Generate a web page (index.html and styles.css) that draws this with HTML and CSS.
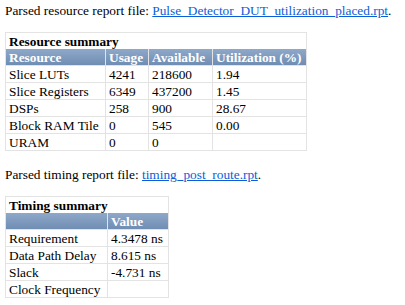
FILE: index.html
```html
<!DOCTYPE html>
<html>
<head>
<meta charset="utf-8">
<link rel="stylesheet" href="styles.css">
</head>
<body>
<p class="line">Parsed resource report file: <a href="#">Pulse_Detector_DUT_utilization_placed.rpt</a>.</p>
<table class="report res">
  <tr><td class="caption" colspan="4">Resource summary</td></tr>
  <tr class="head"><th class="c1">Resource</th><th class="c2">Usage</th><th class="c3">Available</th><th class="c4">Utilization (%)</th></tr>
  <tr><td>Slice LUTs</td><td>4241</td><td>218600</td><td>1.94</td></tr>
  <tr><td>Slice Registers</td><td>6349</td><td>437200</td><td>1.45</td></tr>
  <tr><td>DSPs</td><td>258</td><td>900</td><td>28.67</td></tr>
  <tr><td>Block RAM Tile</td><td>0</td><td>545</td><td>0.00</td></tr>
  <tr><td>URAM</td><td>0</td><td>0</td><td></td></tr>
</table>
<p class="line second">Parsed timing report file: <a href="#">timing_post_route.rpt</a>.</p>
<table class="report tim">
  <tr><td class="caption" colspan="2">Timing summary</td></tr>
  <tr class="head"><th class="t1"></th><th class="t2">Value</th></tr>
  <tr><td>Requirement</td><td>4.3478 ns</td></tr>
  <tr><td>Data Path Delay</td><td>8.615 ns</td></tr>
  <tr><td>Slack</td><td>-4.731 ns</td></tr>
  <tr><td>Clock Frequency</td><td></td></tr>
</table>
</body>
</html>
```
FILE: styles.css
```css
html, body {
  margin: 0;
  background: #ffffff;
}
body {
  padding: 3px 5px;
  font-family: "Liberation Serif", "Times New Roman", serif;
  font-size: 13.33px;
  color: #000000;
}
.line {
  margin: 0;
  line-height: 15px;
}
.line a {
  color: #0b5ed8;
  text-decoration: underline;
}
.res {
  margin-top: 14px;
}
.second {
  margin-top: 16px;
}
.tim {
  margin-top: 14px;
}
.report {
  border-collapse: collapse;
  border: 1px solid #e3e3e3;
}
.report td, .report th {
  border: 1px solid #e3e3e3;
  height: 16px;
  padding: 0 3px 0 3px;
  line-height: 15px;
  text-align: left;
  white-space: nowrap;
}
.report td.caption {
  font-weight: bold;
  border-bottom: none;
}
.report .head th {
  color: #ffffff;
  font-weight: bold;
  background: linear-gradient(#8ea8c8, #6f8db3);
  border-top: none;
  border-bottom: 1px solid #e3e3e3;
  border-color: #e3e3e3;
}
.c1 { width: 93px; }
.c2 { width: 36px; }
.c3 { width: 57px; }
.c4 { width: 87px; }
.t1 { width: 95px; }
.t2 { width: 54px; }
```
